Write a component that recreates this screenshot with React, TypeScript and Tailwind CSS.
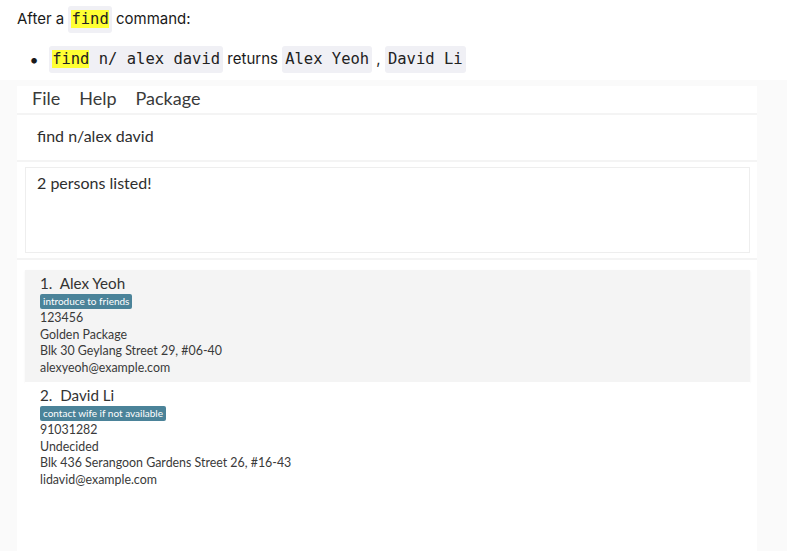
import React from "react";

const mono = { fontFamily: '"DejaVu Sans Mono", "Liberation Mono", monospace' };

function Code({ children }: { children: React.ReactNode }) {
  return (
    <code
      className="rounded-[3px] bg-[#f0f0f5] px-[3px] py-[2px] text-[15.5px] text-[#222]"
      style={mono}
    >
      {children}
    </code>
  );
}

function Hl({ children }: { children: React.ReactNode }) {
  return <span className="bg-[#ffff33]">{children}</span>;
}

type Person = {
  idx: number;
  name: string;
  tag: string;
  phone: string;
  pkg: string;
  address: string;
  email: string;
};

const people: Person[] = [
  {
    idx: 1,
    name: "Alex Yeoh",
    tag: "introduce to friends",
    phone: "123456",
    pkg: "Golden Package",
    address: "Blk 30 Geylang Street 29, #06-40",
    email: "alexyeoh@example.com",
  },
  {
    idx: 2,
    name: "David Li",
    tag: "contact wife if not available",
    phone: "91031282",
    pkg: "Undecided",
    address: "Blk 436 Serangoon Gardens Street 26, #16-43",
    email: "lidavid@example.com",
  },
];

function Card({ p, shaded }: { p: Person; shaded: boolean }) {
  return (
    <div
      className={`h-[112px] pl-[15px] pt-[4px] text-[#3a3a3a] ${
        shaded ? "bg-[#f4f4f4] shadow-[0_1px_2px_rgba(0,0,0,0.06)]" : "bg-white"
      }`}
    >
      <div className="text-[15.2px] leading-[19px] text-[#333]">
        {p.idx}.&nbsp; {p.name}
      </div>
      <div className="mt-[1px] flex">
        <span className="rounded-[2px] bg-[#4b8399] px-[3px] text-[10px] leading-[15px] text-white">
          {p.tag}
        </span>
      </div>
      <div className="mt-[1px] text-[12.4px] leading-[16.7px]">
        <div>{p.phone}</div>
        <div>{p.pkg}</div>
        <div>{p.address}</div>
        <div>{p.email}</div>
      </div>
    </div>
  );
}

export default function App() {
  return (
    <div
      className="h-[551px] w-[787px] overflow-hidden bg-white"
      style={{ fontFamily: 'Inter, "Noto Sans", sans-serif' }}
    >
      <div className="h-[80px] px-[17px] text-[15px] text-[#1a1a1a]">
        <div className="flex h-[39px] items-center">
          <span>After a&nbsp;</span>
          <Code>
            <Hl>find</Hl>
          </Code>
          <span>&nbsp;command:</span>
        </div>
        <div className="flex h-[41px] items-center pl-[12px]">
          <span className="mr-[10px] text-[18px] leading-none">•</span>
          <Code>
            <Hl>find</Hl> n/ alex david
          </Code>
          <span>&nbsp;returns&nbsp;</span>
          <Code>Alex Yeoh</Code>
          <span>&nbsp;,&nbsp;</span>
          <Code>David Li</Code>
        </div>
      </div>
      <div
        className="h-[471px] bg-[#fafafa] pl-[17px] pr-[30px] pt-[6px]"
        style={{ fontFamily: 'Lato, "Open Sans", sans-serif' }}
      >
        <div className="flex h-full flex-col bg-white">
          <div className="flex h-[27px] items-center gap-[19px] pb-[2px] pl-[15px] text-[18px] text-[#3a3a3a]">
            <span>File</span>
            <span>Help</span>
            <span>Package</span>
          </div>
          <div className="h-[2px] bg-[#f4f4f4]" />
          <div className="flex h-[45px] items-center pb-[3px] pl-[20px] text-[16px] text-[#2e2e2e]">
            find n/alex david
          </div>
          <div className="h-[2px] bg-[#f4f4f4]" />
          <div className="h-[96px] pl-[8px] pr-[7px] pt-[5px]">
            <div className="h-[86px] border border-[#eeeeee] pl-[11px] pt-[3px] text-[16px] text-[#2e2e2e]">
              2 persons listed!
            </div>
          </div>
          <div className="h-[2px] bg-[#f4f4f4]" />
          <div className="flex flex-col pl-[8px] pr-[7px] pt-[10px]">
            {people.map((p, i) => (
              <Card key={p.idx} p={p} shaded={i === 0} />
            ))}
          </div>
        </div>
      </div>
    </div>
  );
}
